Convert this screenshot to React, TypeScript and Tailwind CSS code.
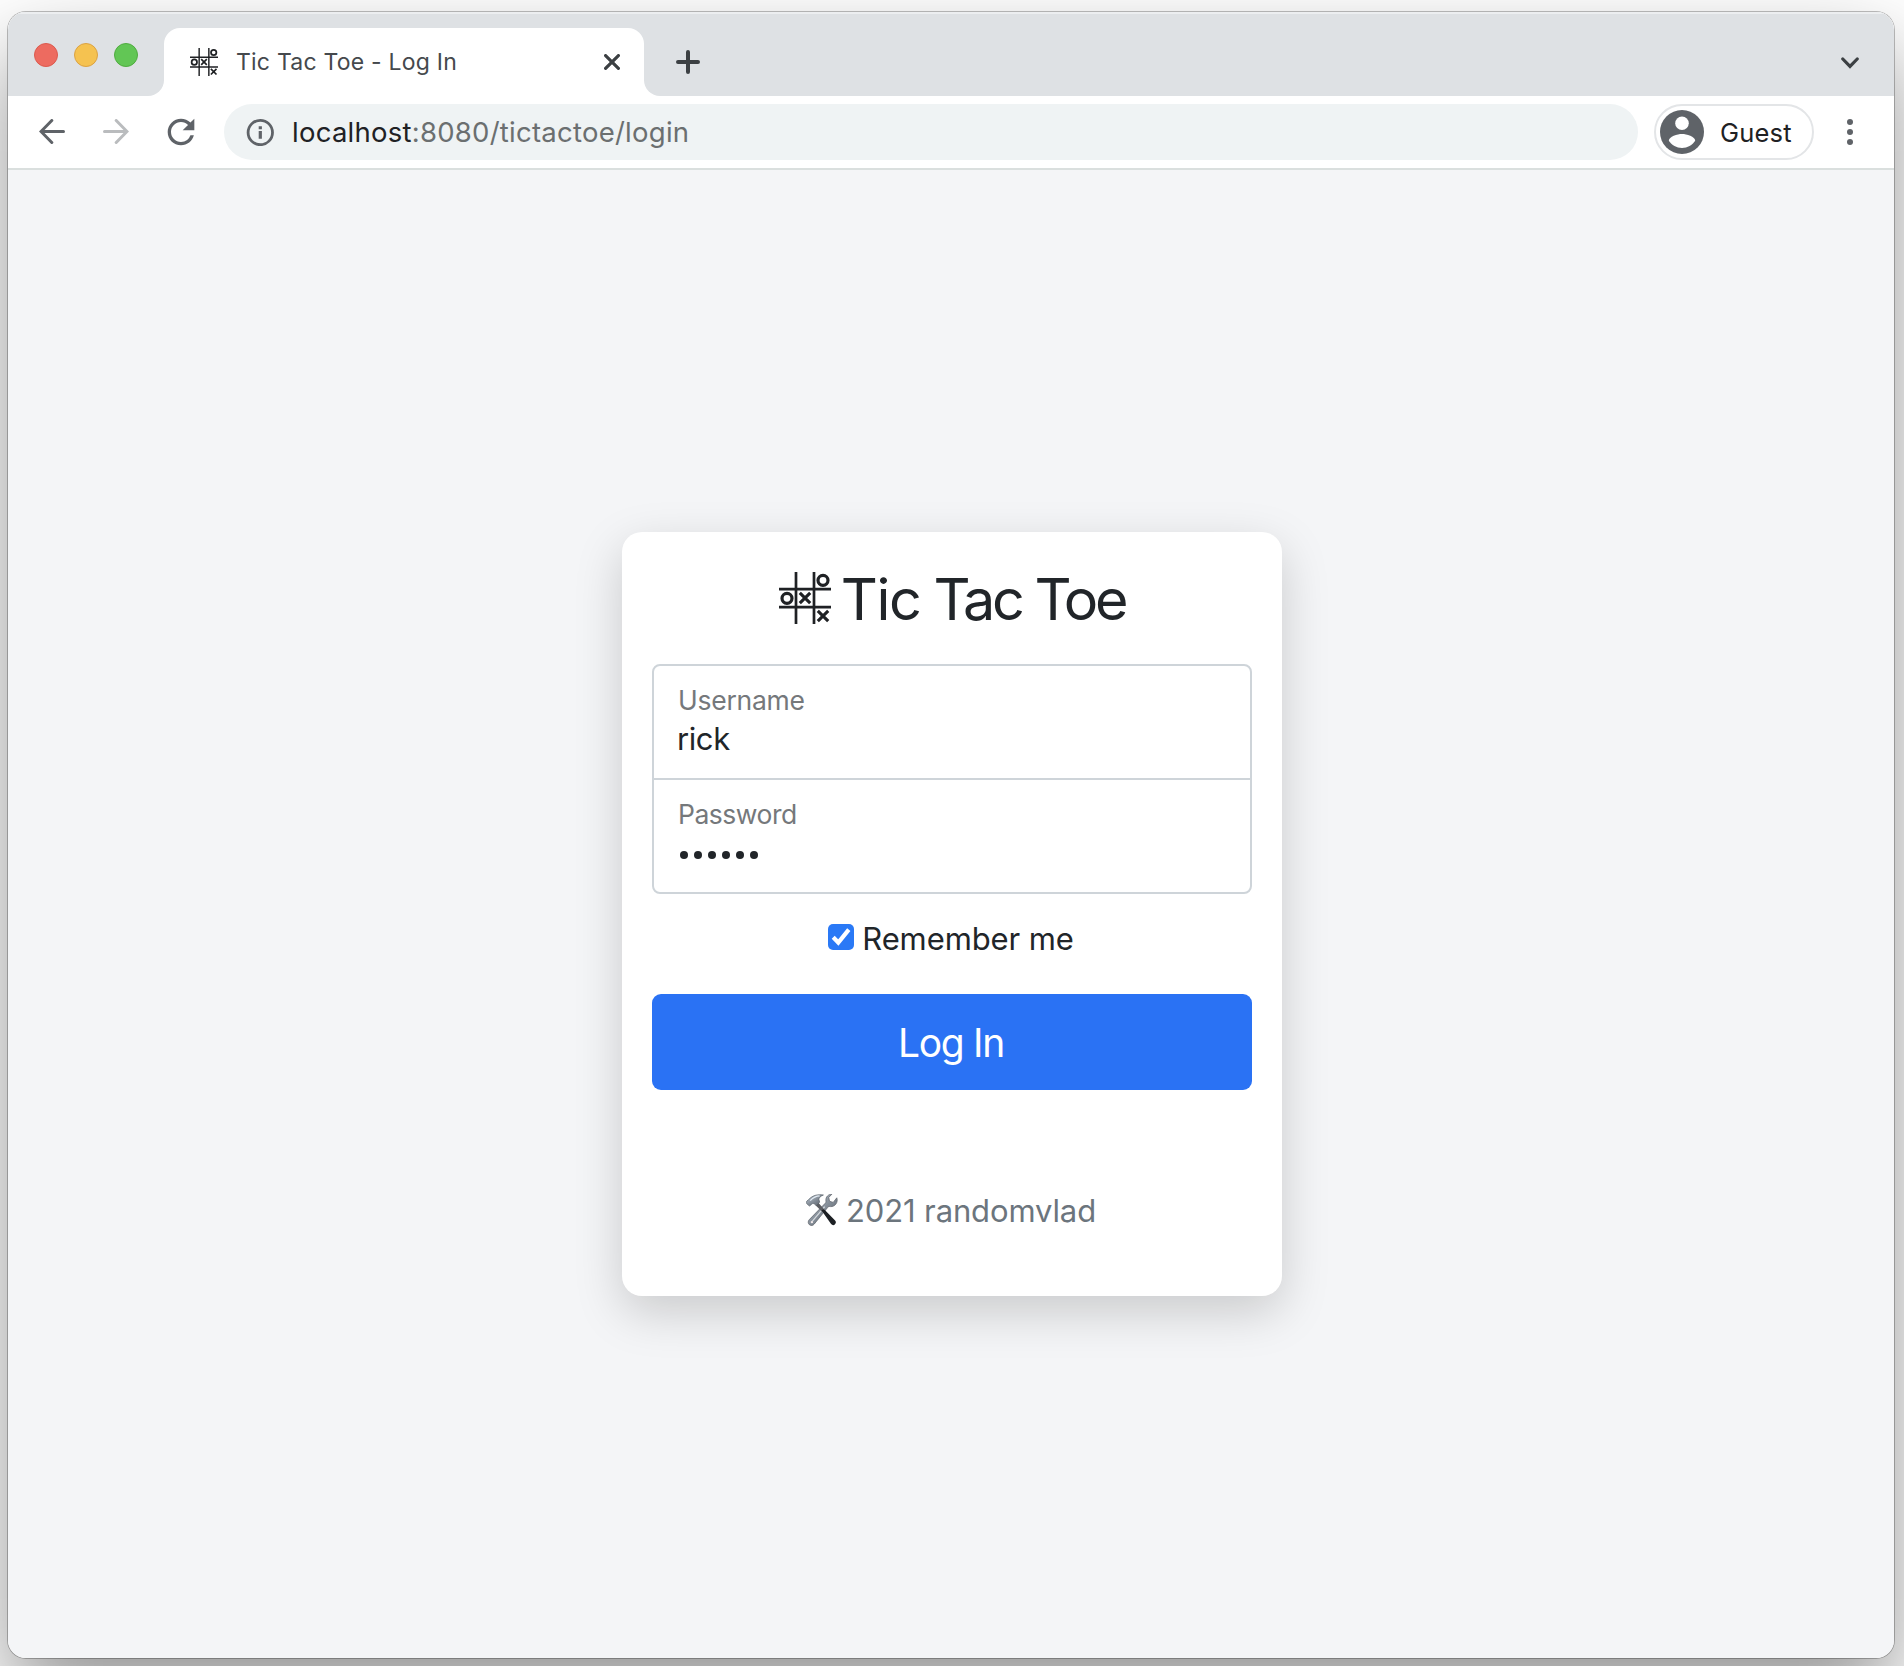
import React from "react";

function BoardIcon({ className }: { className: string }) {
  return (
    <svg viewBox="0 0 52 52" className={className} fill="none" stroke="#1f2124">
      <path d="M17 0V52M35 0V52M0 17.2H52M0 35.2H52" strokeWidth="2.7" />
      <circle cx="44" cy="8.3" r="5" strokeWidth="3.2" />
      <circle cx="8" cy="26.3" r="5" strokeWidth="3.2" />
      <path d="M20.8 20.8l10.400 10.400M31.200 20.8l-10.400 10.400M38.800 38.800l10.400 10.400M49.200 38.800l-10.400 10.400" strokeWidth="3.100" />
    </svg>
  );
}

function ToolsIcon() {
  return (
    <svg viewBox="0 0 32 32" className="h-8 w-8 shrink-0">
      <defs>
        <linearGradient id="steel" x1="0" y1="0" x2="1" y2="1">
          <stop offset="0" stopColor="#c3d0dc" />
          <stop offset="0.5" stopColor="#858e98" />
          <stop offset="1" stopColor="#555c64" />
        </linearGradient>
      </defs>
      <path
        d="M30.8 3.8l-3.6 4.6-3.7-1.2-.7-3.8 3.1-3.2c-3.6-.1-6.4 2.7-6 6.600.1 1.100.1 1.700-.7 2.500L3.300 25.600c-1.500 1.500-1.400 3.900.1 5.100 1.500 1.300 3.700 1 4.900-.7L21.800 13.300c.7-.8 1.300-.9 2.600-.7 4.600.4 8-4.300 6.400-8.800z"
        fill="url(#steel)"
        stroke="#5a5f66"
        strokeWidth="0.7"
      />
      <path d="M6.200 27.300l12.500-14.600" stroke="#d5d9de" strokeWidth="1.300" />
      <circle cx="5.900" cy="28.100" r="1.200" fill="#f1e9ea" />
      <path d="M9.600 11.200l2.600-2.600 6.300 7.100-2.200 2.200z" fill="#5a5c60" />
      <path
        d="M15.600 16.600c1.200-1.500 2.400-1.300 3.500-.3l10 10.300c1.300 1.500.8 3-.3 3.900-1.200 1-2.600.8-3.700-.5z"
        fill="#1d2024"
      />
      <path
        d="M.9 9.800c-.9-.8-.8-1.800 0-2.700L2.600 5.600C6.800 1 12 .2 17.400 1c-3 1.300-4.600 2.600-4.500 4.500l.8 2.600-3.400 3.500-2.200-1.900c-1.400-.5-2.400 0-3.200 1.300L3.400 12z"
        fill="url(#steel)"
        stroke="#59616a"
        strokeWidth="0.7"
      />
      <path d="M4.200 6.600C7.600 3.200 10.600 2 13.600 1.900" stroke="#e3ebf3" strokeWidth="1.300" fill="none" />
    </svg>
  );
}

function TabStrip() {
  return (
    <div className="h-[84px] bg-white">
      <div className="h-4 bg-[#dee1e4] shadow-[inset_0_2px_0_#eceef0]" />
      <div className="flex h-[68px]">
        <div className="flex w-[156px] gap-4 rounded-br-2xl bg-[#dee1e4] pl-[26px] pt-[15px]">
          <span className="h-6 w-6 rounded-full border border-[#dc5a4e] bg-[#ed6b60]" />
          <span className="h-6 w-6 rounded-full border border-[#dba243] bg-[#f5c250]" />
          <span className="h-6 w-6 rounded-full border border-[#50ac40] bg-[#62c655]" />
        </div>
        <div className="w-[480px] bg-[#dee1e4]">
          <div className="flex h-full items-center rounded-t-2xl bg-white pl-[26px] pr-6">
            <BoardIcon className="h-7 w-7" />
            <span className="ml-[18px] text-[23px] leading-7 tracking-[0.22px] text-[#45494d]">Tic Tac Toe - Log In</span>
            <svg viewBox="0 0 16 16" className="ml-auto h-4 w-4" stroke="#3c4043" strokeWidth="3.200" strokeLinecap="round">
              <path d="M1.600 1.600l12.800 12.800M14.400 1.600L1.600 14.400" />
            </svg>
          </div>
        </div>
        <div className="flex flex-1 items-center justify-between rounded-bl-2xl bg-[#dee1e4] pl-8 pr-[35px]">
          <svg viewBox="0 0 24 24" className="h-6 w-6" stroke="#3c4043" strokeWidth="4" strokeLinecap="round">
            <path d="M12 2v20M2 12h20" />
          </svg>
          <svg viewBox="0 0 18 12" className="mt-px h-3 w-[18px]" fill="none" stroke="#3c4043" strokeWidth="3.200" strokeLinecap="round">
            <path d="M1.800 2L9 9.400 16.200 2" />
          </svg>
        </div>
      </div>
    </div>
  );
}

function Toolbar() {
  return (
    <div className="flex h-[74px] items-center border-b-2 border-[#dadfde] bg-white pl-[31px]">
      <svg viewBox="0 0 26 26" className="h-[26px] w-[26px]" fill="none" stroke="#5f6368" strokeWidth="3" strokeLinecap="round">
        <path d="M2.400 12.500H24.500M12.800 1.500L2 12.500l10.800 11" />
      </svg>
      <svg viewBox="0 0 26 26" className="ml-[38px] h-[26px] w-[26px]" fill="none" stroke="#babcbe" strokeWidth="3" strokeLinecap="round">
        <path d="M23.600 12.500H1.500M13.200 1.500L24 12.500l-10.800 11" />
      </svg>
      <svg viewBox="0 0 24 24" className="ml-[31.500px] h-10 w-10" fill="#5f6368">
        <path d="M17.650 6.350A7.958 7.958 0 0 0 12 4c-4.420 0-7.990 3.580-7.990 8s3.570 8 7.990 8c3.730 0 6.840-2.550 7.730-6h-2.080A5.990 5.990 0 0 1 12 18c-3.310 0-6-2.690-6-6s2.690-6 6-6c1.660 0 3.140.690 4.220 1.780L13 11h7V4l-2.350 2.350z" />
      </svg>
      <div className="ml-[23.500px] flex h-14 w-[1414px] items-center rounded-full bg-[#eff3f4] pl-[22px]">
        <svg viewBox="0 0 28 28" className="h-7 w-7" fill="none" stroke="#5f6368">
          <circle cx="14.300" cy="14.500" r="12.200" strokeWidth="2.800" />
          <path d="M14.300 8.200v3M14.300 13v7.800" strokeWidth="3.200" />
        </svg>
        <span className="ml-[18px] text-[27.500px] leading-8 tracking-[0.25px] text-[#6b6f70]">
          <span className="text-[#202124]">localhost</span>:8080/tictactoe/login
        </span>
      </div>
      <div className="ml-4 flex h-14 w-40 items-center rounded-full border-2 border-[#e3e5e7] pl-1">
        <svg viewBox="0 0 44 44" className="h-11 w-11">
          <circle cx="22" cy="22" r="22" fill="#5f6368" />
          <circle cx="22" cy="13.200" r="6.800" fill="#fff" />
          <path d="M8.800 30.800c0-4.300 8.700-6.800 13.200-6.800s13.200 2.500 13.200 6.800C32.300 35.200 27.500 38 22 38s-10.300-2.800-13.200-7.200z" fill="#fff" />
        </svg>
        <span className="ml-4 mt-0.5 text-[25.500px] leading-8 tracking-[0.2px] text-[#202124]">Guest</span>
      </div>
      <div className="ml-[33px] flex flex-col gap-1">
        <span className="h-1.5 w-1.5 rounded-full bg-[#5f6368]" />
        <span className="h-1.5 w-1.5 rounded-full bg-[#5f6368]" />
        <span className="h-1.5 w-1.5 rounded-full bg-[#5f6368]" />
      </div>
    </div>
  );
}

function LoginCard() {
  return (
    <div className="mt-[362px] flex h-[764px] w-[660px] flex-col items-center rounded-[20px] bg-white px-[30px] pt-8 text-[#212529] shadow-[0_16px_48px_rgba(0,0,0,0.175)]">
      <div className="flex h-[68px] items-center">
        <BoardIcon className="h-[52px] w-[52px]" />
        <h1 className="ml-2.5 mt-0.5 text-[57.500px] font-normal leading-[68px] tracking-[-3.3px]">
          <span className="tracking-[-1.4px]">Tic</span> Tac Toe
        </h1>
      </div>
      <div className="mt-8 flex h-[230px] w-full flex-col rounded-lg border-2 border-[#ced4d9]">
        <label className="flex h-[114px] flex-col border-b-2 border-[#ced4d9] pl-6 pt-4">
          <span className="text-[26.500px] leading-9 tracking-[-0.25px] text-[#75787b]">Username</span>
          <span className="ml-[-1px] text-[31px] leading-[42px] tracking-[-0.4px]">rick</span>
        </label>
        <label className="flex flex-col pl-6 pt-4">
          <span className="text-[26.500px] leading-9 tracking-[-0.5px] text-[#75787b]">Password</span>
          <span className="ml-0.5 mt-[19px] flex gap-1.5">
            {[0, 1, 2, 3, 4, 5].map((n) => (
              <span key={n} className="h-2 w-2 rounded-full bg-[#212529]" />
            ))}
          </span>
        </label>
      </div>
      <label className="mt-5 flex h-[50px] items-center pr-0.5">
        <span className="mb-[4px] flex h-[26px] w-[26px] items-center justify-center rounded-[5px] bg-[#2a79f6]">
          <svg viewBox="0 0 26 26" className="h-[26px] w-[26px]" fill="none" stroke="#fff" strokeWidth="4.200">
            <path d="M5.200 13.300l5.100 5.200L20.800 5.600" />
          </svg>
        </span>
        <span className="ml-2 text-[31px] leading-[50px] tracking-[-0.1px]">Remember me</span>
      </label>
      <button className="mt-[30px] h-24 w-full rounded-[9px] bg-[#2a72f4] pr-0.5 pt-0.5 text-[39px] leading-[60px] tracking-[-1.3px] text-white">Log In</button>
      <div className="mt-24 flex h-12 items-center pr-0.5 text-[#6c757d]">
        <ToolsIcon />
        <span className="ml-2 mt-0.5 text-[31px] leading-[48px] tracking-[-0.12px]">2021 randomvlad</span>
      </div>
    </div>
  );
}

export default function App() {
  return (
    <div className="h-[1666px] w-[1904px] overflow-hidden bg-white pl-2 pt-3 font-['Inter',sans-serif]">
      <div className="h-[1646px] w-[1886px] rounded-[18px] shadow-[0_0_0_1px_rgba(0,0,0,0.25),0_40px_86px_rgba(0,0,0,0.42)]">
        <div className="flex h-full flex-col overflow-hidden rounded-[18px] bg-[#f4f5f7]">
          <TabStrip />
          <Toolbar />
          <div className="flex flex-1 items-start justify-center pl-0.5">
            <LoginCard />
          </div>
        </div>
      </div>
    </div>
  );
}
